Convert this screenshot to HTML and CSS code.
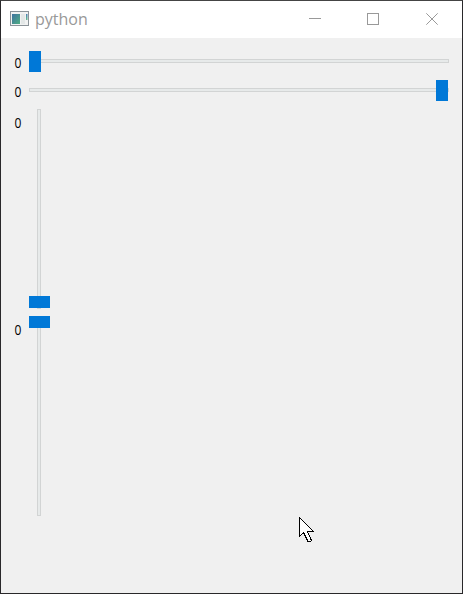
FILE: index.html
```html
<!DOCTYPE html>
<html lang="en">
<head>
<meta charset="utf-8">
<title>python</title>
<link rel="stylesheet" href="styles.css">
</head>
<body>
<div class="window">
  <header class="titlebar">
    <svg class="app-icon" width="20" height="16" viewBox="0 0 20 16">
      <defs>
        <linearGradient id="pane" x1="0" y1="0" x2="1" y2="1"><stop offset="0" stop-color="#3f72a0"/><stop offset="1" stop-color="#4fae83"/></linearGradient>
        <linearGradient id="strip" x1="0" y1="0" x2="0" y2="1"><stop offset="0" stop-color="#4d7fb5"/><stop offset="1" stop-color="#62bd8d"/></linearGradient>
      </defs>
      <rect x="0.5" y="0.5" width="18" height="14" fill="#f1f2f2" stroke="#8b9399"/>
      <rect x="2" y="3" width="8" height="10" fill="url(#pane)"/>
      <rect x="11" y="3" width="4" height="10" fill="#e3e7e7"/>
      <rect x="16" y="3" width="1.5" height="6" fill="url(#strip)"/>
    </svg>
    <span class="title">python</span>
    <svg class="controls" width="130" height="13" viewBox="0 0 130 13" fill="none" stroke="#999">
      <path d="M0 5.5H12M58.5 0.5H69.5V11.5H58.5Z" shape-rendering="crispEdges"/>
      <path d="M117.3 0.3L128.7 11.7M128.7 0.3L117.3 11.7"/>
    </svg>
  </header>
  <main class="form">
    <span class="value">0</span>
    <div class="slider horizontal"><div class="handle"></div></div>
    <span class="value">0</span>
    <div class="slider horizontal at-end"><div class="handle"></div></div>
    <span class="value">0</span>
    <div class="slider vertical at-end"><div class="handle"></div></div>
    <span class="value">0</span>
    <div class="slider vertical at-start"><div class="handle"></div></div>
  </main>
  <svg class="pointer" width="17" height="26" viewBox="0 0 17 26" shape-rendering="crispEdges">
    <path d="M0.5 0.5V19.5L4.5 15.5L9 24.5H11.5L12.5 23.5L8.5 14.5H14.5Z" fill="#fff" stroke="#000"/>
  </svg>
</div>
</body>
</html>
```
FILE: styles.css
```css
*, *::before { box-sizing: border-box; }
body { margin: 0; }
.window {
  position: relative;
  width: 463px;
  height: 594px;
  border: 1px solid #29282a;
  border-top-color: #444;
  background: #f0f0f0;
  overflow: hidden;
}
.titlebar {
  display: flex;
  height: 37px;
  padding: 10px 23px 0 9px;
  background: #fff;
}
.title {
  margin: -3px 0 0 5px;
  color: #999;
  font: 16px/22px "Open Sans", "Noto Sans", sans-serif;
}
.controls { margin: 2px 0 0 auto; }
.app-icon { flex: none; }
.form {
  display: grid;
  grid-template-columns: 7px 420px;
  grid-template-rows: 21px 21px 200px 199px;
  gap: 8px;
  padding: 13px 13px 0;
}
.value {
  align-self: start;
  margin-top: 2px;
  color: #000;
  font: 14px/20px "Open Sans", "Noto Sans", sans-serif;
  text-align: center;
  transform: scaleX(0.86);
}
.value:nth-of-type(n+3) { margin-top: 4px; }
.value:nth-of-type(4) { margin-top: 3px; }
.slider { display: flex; position: relative; }
.slider::before {
  content: "";
  position: absolute;
  background: #e7eaea;
  border: 1px solid #d2d4d4;
}
.horizontal::before { inset: 8px 0 9px 0; }
.vertical::before { inset: 0 auto 0 8px; width: 4px; }
.vertical { flex-direction: column; }
.vertical.at-start { margin-top: -1px; }
.at-end { justify-content: flex-end; }
.handle {
  position: relative;
  width: 12px;
  height: 21px;
  background: #0078d7;
}
.horizontal.at-end .handle { margin-right: 1px; }
.vertical .handle { width: 21px; height: 12px; }
.vertical.at-end .handle { margin-bottom: 1px; }
.pointer { position: absolute; left: 298px; top: 516px; }
```
